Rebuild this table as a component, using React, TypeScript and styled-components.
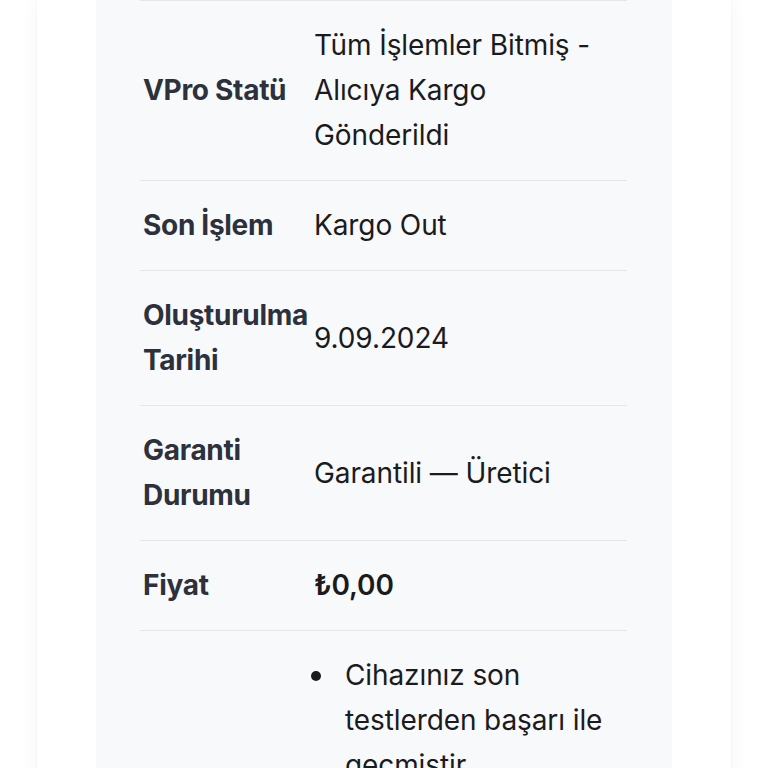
import React from "react";
import styled, { createGlobalStyle } from "styled-components";

const Global = createGlobalStyle`
  html, body { margin: 0; padding: 0; background: #ffffff; }
  body { font-family: Inter, "Noto Sans", sans-serif; -webkit-font-smoothing: antialiased; }
  * { box-sizing: border-box; }
`;

const Page = styled.div`
  padding: 0 37px 0 37px;
  height: 768px;
  overflow: hidden;
`;

const Card = styled.div`
  background: #ffffff;
  box-shadow: 0 0 18px rgba(0, 0, 0, 0.045), 0 0 3px rgba(0, 0, 0, 0.03);
  padding: 0 59px;
  min-height: 900px;
`;

const Panel = styled.div`
  background: #f8f9fb;
  padding: 0 45px 0 44px;
  min-height: 900px;
`;

const Table = styled.div`
  border-top: 1px solid #e4e6ea;
`;

const Row = styled.div`
  display: grid;
  grid-template-columns: 174px 1fr;
  align-items: center;
  padding: 22px 0 22px;
  border-bottom: 1px solid #e4e6ea;
  line-height: 45px;
  font-size: 28px;
`;

const Label = styled.div`
  padding-left: 3px;
  font-weight: 700;
  color: #2c313c;
  letter-spacing: -0.3px;
`;

const Value = styled.div<{ $bold?: boolean }>`
  color: #1b1b1d;
  font-weight: ${(p) => (p.$bold ? 600 : 400)};
  letter-spacing: -0.1px;
`;

const List = styled.ul`
  margin: 0;
  padding: 0;
  list-style: none;
  color: #1b1b1d;
`;

const Item = styled.li`
  display: grid;
  grid-template-columns: 31px 1fr;
  &::before {
    content: "";
    width: 10px;
    height: 10px;
    border-radius: 50%;
    background: #1b1b1d;
    margin: 18px 0 0 -3px;
  }
`;

const rows: { label: string; value: string; bold?: boolean }[] = [
  { label: "VPro Statü", value: "Tüm İşlemler Bitmiş - Alıcıya Kargo Gönderildi" },
  { label: "Son İşlem", value: "Kargo Out" },
  { label: "Oluşturulma Tarihi", value: "9.09.2024" },
  { label: "Garanti Durumu", value: "Garantili — Üretici" },
  { label: "Fiyat", value: "₺0,00", bold: true },
];

export default function App() {
  return (
    <>
      <Global />
      <Page>
        <Card>
          <Panel>
            <Table>
              {rows.map((r) => (
                <Row key={r.label}>
                  <Label>{r.label}</Label>
                  <Value $bold={r.bold}>{r.value}</Value>
                </Row>
              ))}
              <Row>
                <Label />
                <Value>
                  <List>
                    <Item>
                      <span>Cihazınız son testlerden başarı ile geçmiştir.</span>
                    </Item>
                  </List>
                </Value>
              </Row>
            </Table>
          </Panel>
        </Card>
      </Page>
    </>
  );
}
